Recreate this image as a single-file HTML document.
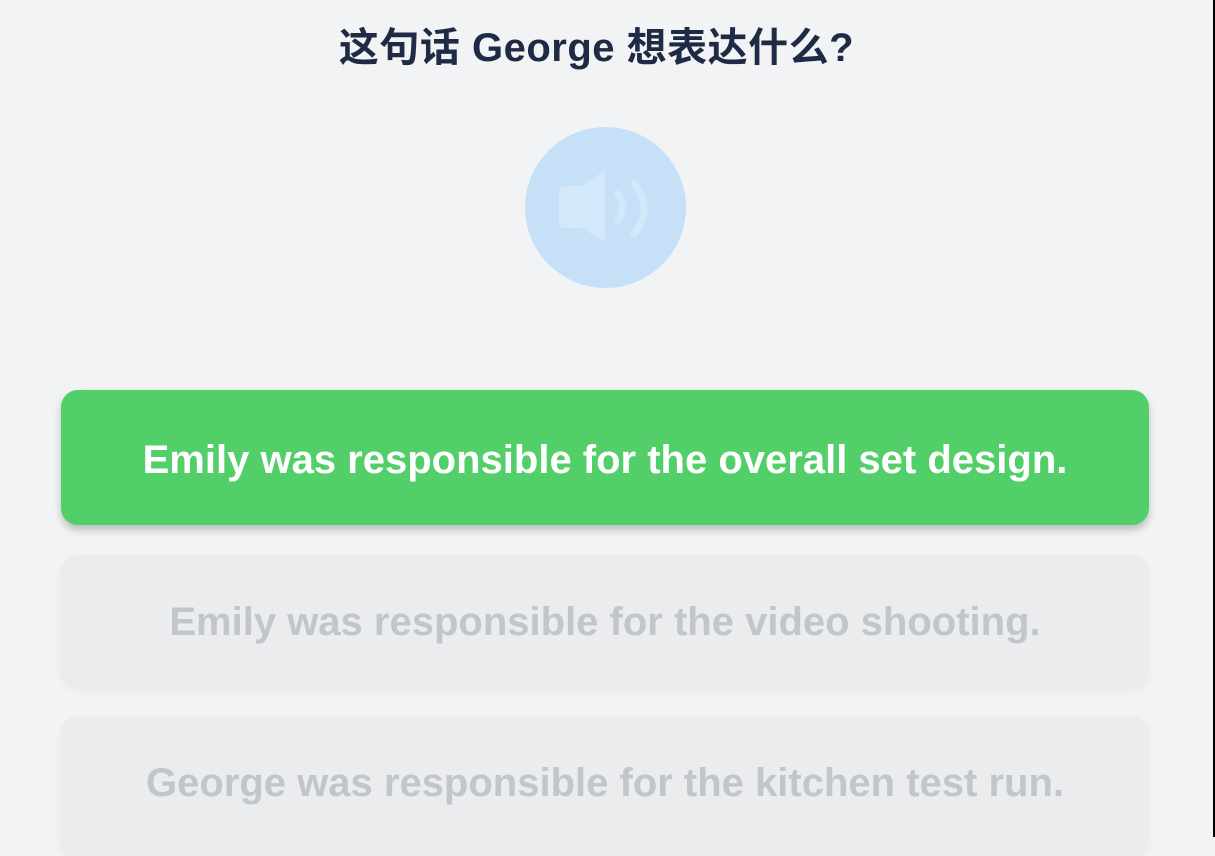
<!DOCTYPE html>
<html><head><meta charset="utf-8"><style>
html,body{margin:0;padding:0}
body{width:1215px;height:837px;background:#f2f3f5;position:relative;overflow:hidden;font-family:"Liberation Sans","Noto Sans CJK SC",sans-serif}
.bar{position:absolute;right:0;top:0;width:2px;height:837px;background:#000}
h1{position:absolute;left:0;width:1193px;top:24px;margin:0;text-align:center;font-size:40px;font-weight:bold;color:#1f2a44;line-height:48px;letter-spacing:0.5px}
.circle{position:absolute;left:525px;top:127px;width:161px;height:161px;border-radius:50%;background:#c6e0f7}
.btn{position:absolute;left:61px;width:1088px;border-radius:17px;text-align:center;font-size:40px;font-weight:bold;letter-spacing:0}
.g{top:390px;height:135px;line-height:141px;background:#53cf69;color:#fff;box-shadow:0 5px 8px rgba(0,0,0,.22)}
.d{background:#ebecee;color:#c2c5cb;box-shadow:0 4px 8px rgba(0,0,0,.05)}
</style></head><body>
<h1>这句话 George 想表达什么?</h1>
<div class="circle">
<svg width="161" height="161" viewBox="0 0 161 161">
<path d="M39 59 h18 l19 -13 q4 -2 4 2 v63 q0 4 -4 2 l-19 -12 h-18 q-5 0 -5 -5 v-32 q0 -5 5 -5z" fill="#d4e8fb"/>
<path d="M93 67 q9 13 0 26" stroke="#d4e8fb" stroke-width="7" fill="none" stroke-linecap="round"/>
<path d="M109 57 q20 25 0 50" stroke="#d4e8fb" stroke-width="7" fill="none" stroke-linecap="round"/>
</svg>
</div>
<div class="btn g">Emily was responsible for the overall set design.</div>
<div class="btn d" style="top:555px;height:131px;line-height:135px">Emily was responsible for the video shooting.</div>
<div class="btn d" style="top:716px;height:140px;line-height:135px">George was responsible for the kitchen test run.</div>
<div class="bar"></div>
</body></html>
